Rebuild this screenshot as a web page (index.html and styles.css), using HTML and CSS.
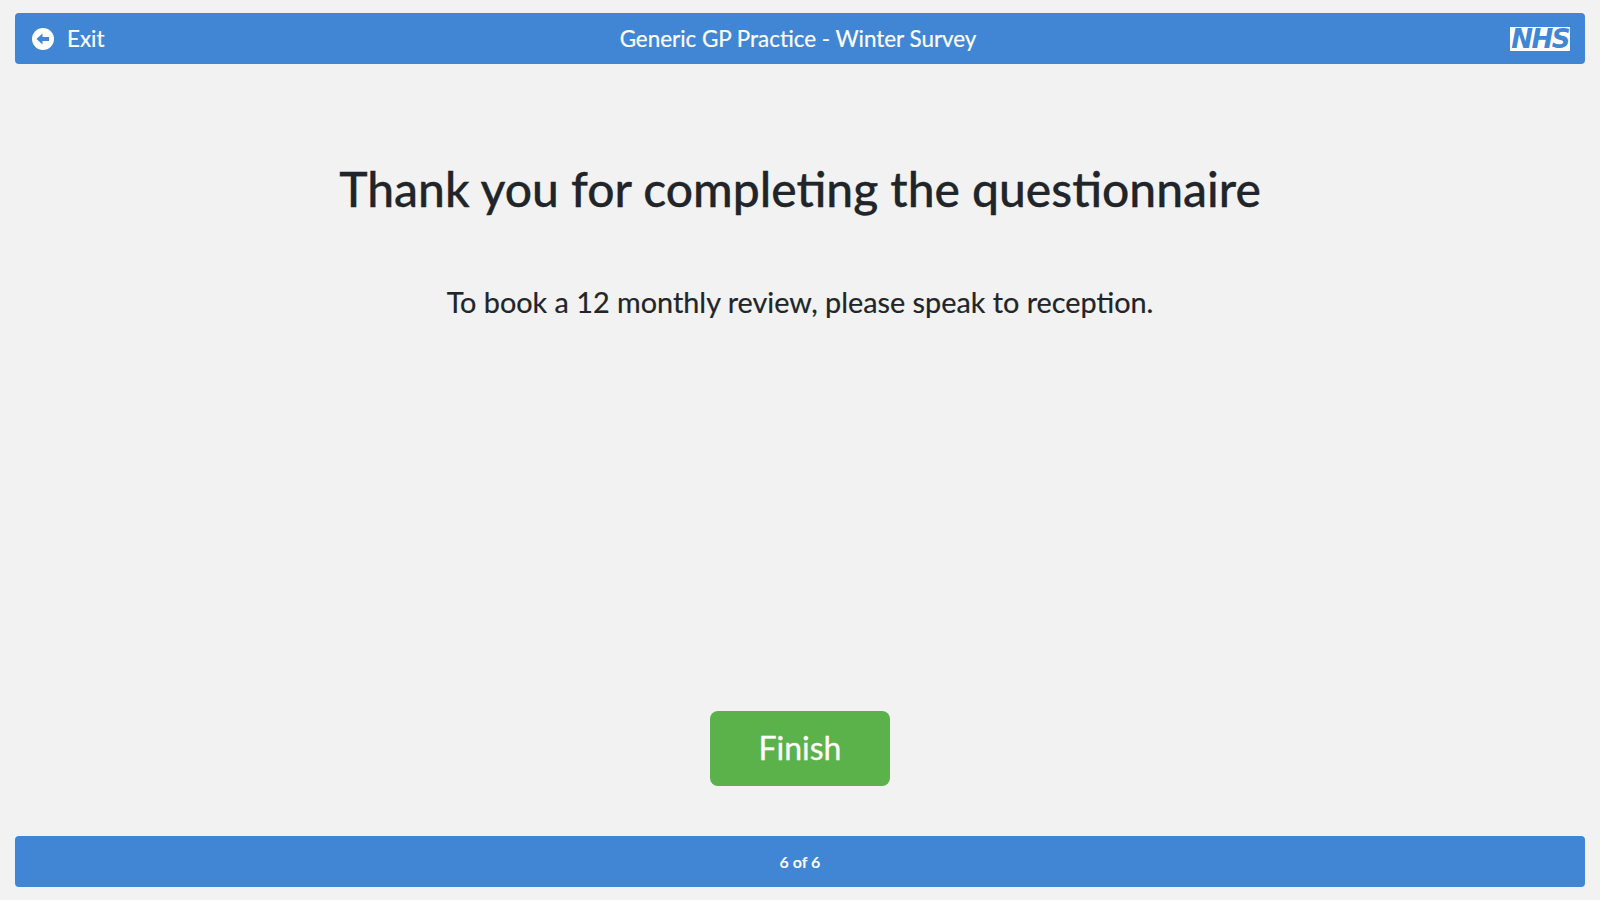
FILE: index.html
```html
<!DOCTYPE html>
<html lang="en">
<head>
    <meta charset="UTF-8">
    <title>Generic GP Practice - Winter Survey</title>
    <link rel="stylesheet" href="styles.css">
</head>
<body>
    <header class="top-bar">
        <a class="exit" href="#">
            <svg class="exit-icon" viewBox="0 0 22 22" aria-hidden="true">
                <circle cx="11" cy="11" r="11" fill="#fff"/>
                <path fill="#4086d4" d="M4.5 11 10.5 5.5V9H17V13H10.5V16.5Z"/>
            </svg>
            <span>Exit</span>
        </a>
        <div class="survey-title">Generic GP Practice - Winter Survey</div>
        <div class="logo-wrap"><span class="nhs-logo">NHS</span></div>
    </header>

    <main class="content">
        <h1 class="heading">Thank you for completing the questionnaire</h1>
        <p class="message">To book a 12 monthly review, please speak to reception.</p>
        <div class="actions">
            <button class="finish-btn" type="button">Finish</button>
        </div>
    </main>

    <footer class="bottom-bar">6 of 6</footer>
</body>
</html>
```

FILE: styles.css
```css
* {
    box-sizing: border-box;
}
body {
    font-family: Lato, "Open Sans", sans-serif;
    display: flex;
    flex-direction: column;
    height: 900px;
    margin: 0;
    padding: 13px 15px;
    background-color: #f2f2f2;
    color: #212529;
    overflow: hidden;
}
.top-bar {
    display: grid;
    grid-template-columns: 1fr auto 1fr;
    align-items: center;
    height: 51px;
    padding: 0 15px 0 17px;
    background-color: #4086d4;
    color: #fff;
    border-radius: 4px;
}
.exit {
    display: flex;
    align-items: center;
    color: #fff;
    text-decoration: none;
    font-size: 22.4px;
    -webkit-text-stroke: 0.2px #fff;
}
.exit-icon {
    width: 22px;
    height: 22px;
    margin-right: 13px;
}
.survey-title {
    padding-right: 6px;
    font-size: 22.4px;
    -webkit-text-stroke: 0.2px #fff;
}
.logo-wrap {
    display: flex;
    justify-content: flex-end;
}
.nhs-logo {
    display: block;
    width: 60px;
    height: 24px;
    background-color: #fff;
    color: #4086d4;
    font-family: "DejaVu Sans", sans-serif;
    font-size: 26px;
    font-weight: 700;
    font-style: italic;
    line-height: 24px;
    text-align: center;
    letter-spacing: -1.5px;
}
.content {
    flex: 1;
    display: flex;
    flex-direction: column;
    align-items: center;
    text-align: center;
}
.heading {
    margin: 96px 0 0;
    font-size: 48px;
    font-weight: 500;
    line-height: 58px;
    -webkit-text-stroke: 0.3px #212529;
}
.message {
    margin: 67px 0 0;
    font-size: 28.8px;
    line-height: 34px;
    -webkit-text-stroke: 0.2px #212529;
}
.actions {
    margin-top: auto;
    margin-bottom: 50px;
}
.finish-btn {
    display: block;
    width: 180px;
    height: 75px;
    padding-bottom: 4px;
    border: 0;
    border-radius: 8px;
    background-color: #5bb24b;
    color: #fff;
    font-family: inherit;
    font-size: 32px;
    -webkit-text-stroke: 0.3px #fff;
}
.bottom-bar {
    display: flex;
    align-items: center;
    justify-content: center;
    height: 51px;
    background-color: #4086d4;
    color: #fff;
    border-radius: 4px;
    font-size: 16px;
    font-weight: 700;
}
```
